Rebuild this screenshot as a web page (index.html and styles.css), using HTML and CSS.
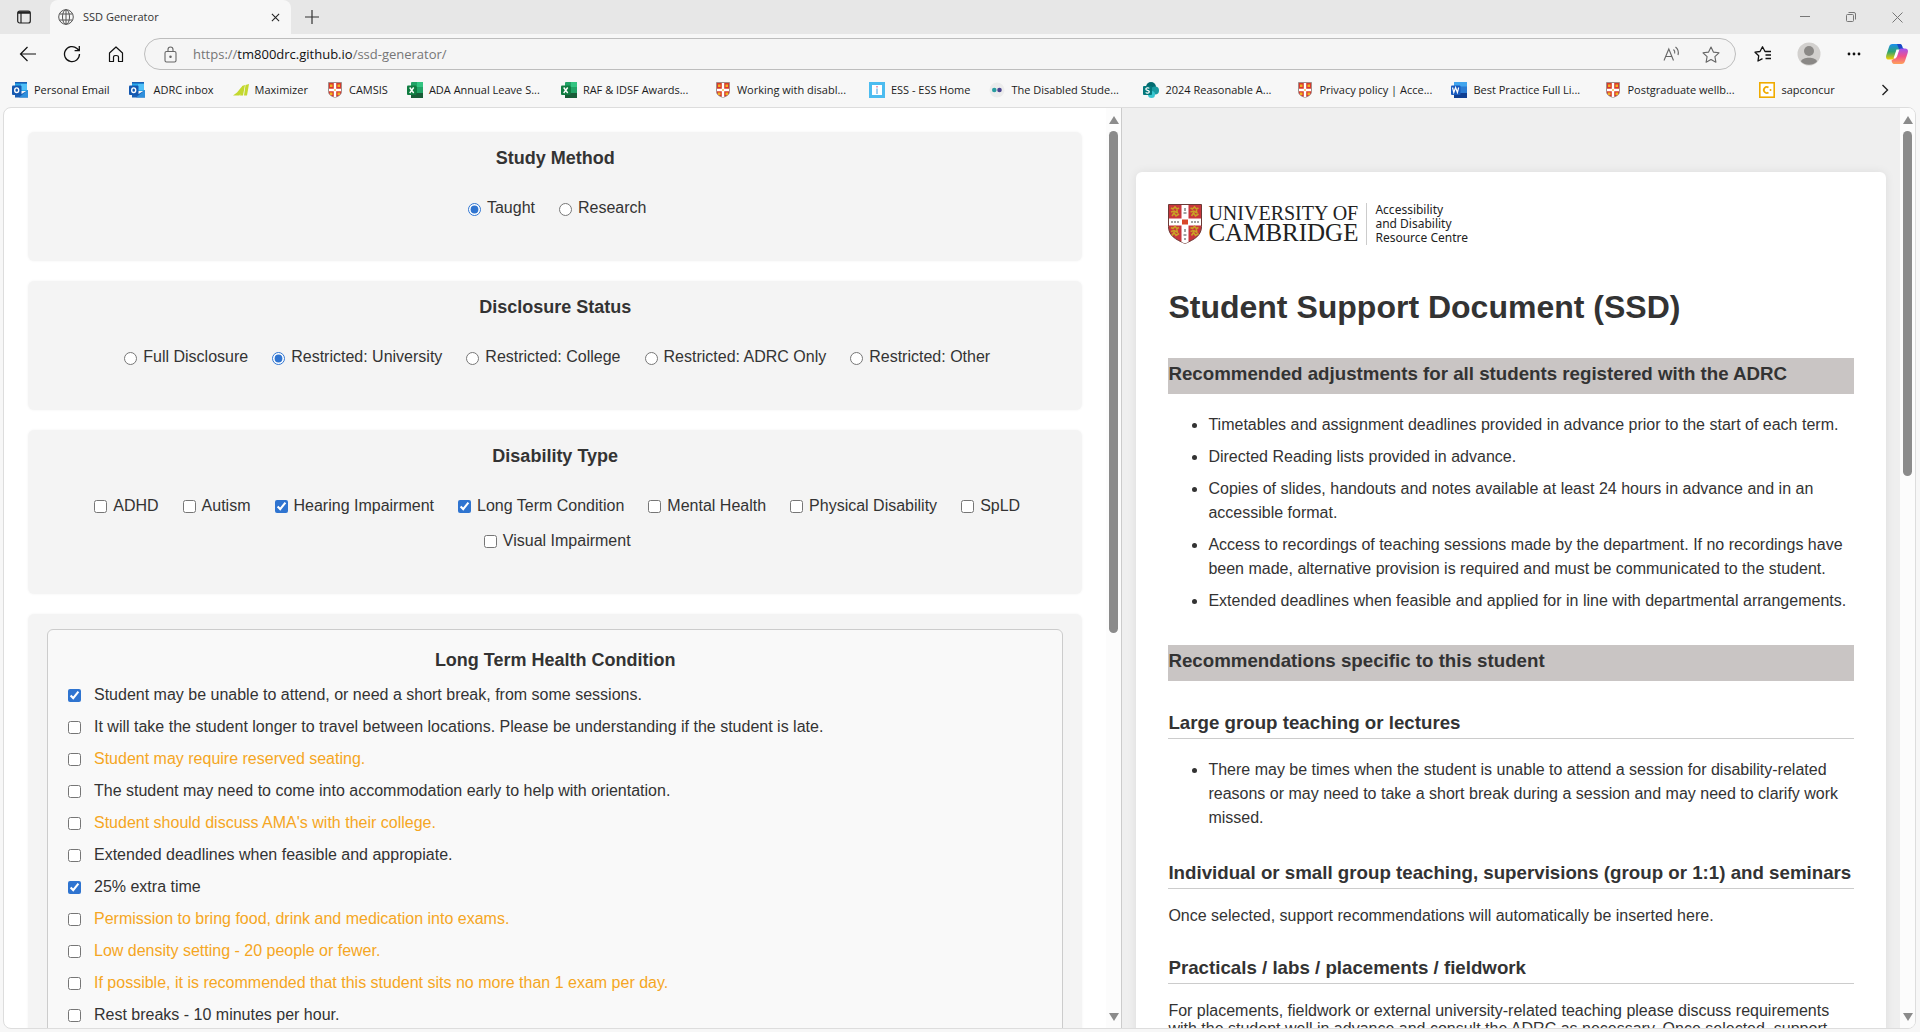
FILE: index.html
```html
<!DOCTYPE html>
<html lang="en">
<head>
<meta charset="utf-8">
<title>SSD Generator</title>
<link rel="stylesheet" href="styles.css">
</head>
<body>
<svg class="defs" aria-hidden="true">
  <symbol id="shield" viewBox="0 0 16 16">
    <path d="M1.500 .5h13v9c0 3.500-3.500 5-6.500 6-3-1-6.500-2.500-6.500-6z" fill="#d8392b" stroke="#8f8a88" stroke-width=".8"/>
    <path d="M6.800 1h2.400v5.800H14v2.400H9.200V15L8 15.500 6.800 15V9.200H2V6.800h4.800z" fill="#fff"/>
    <path d="M3 2.500h2.500v2.500H3zM10.500 2.500H13v2.500h-2.500zM3 10.500h2.500v2.500H3zM10.500 10.500H13v2.500h-2.500zM7.200 7.200h1.600v1.600H7.200z" fill="#f0b323"/>
  </symbol>
  <symbol id="outlook" viewBox="0 0 16 16">
    <path d="M3 0h12v9H3z" fill="#28a8ea"/><path d="M3 0h12v1.500H3z" fill="#1a5fb4"/><path d="M9 2h6v6H9z" fill="#50c0f8"/>
    <path d="M3 8l6.500 4L16 8v7.500H3z" fill="#1a5fb4"/><path d="M16 8v7.500H7z" fill="#2f8fdc"/>
    <rect y="3.500" width="9.500" height="9.500" rx="1" fill="#1458b0"/><ellipse cx="4.700" cy="8.200" rx="2" ry="2.300" fill="none" stroke="#fff" stroke-width="1.400"/>
  </symbol>
  <symbol id="excel" viewBox="0 0 16 16">
    <rect x="4" width="12" height="16" rx="1" fill="#21a366"/><path d="M10 0h6v5h-6z" fill="#33c481"/><path d="M4 5h6v6H4z" fill="#107c41"/><path d="M4 11h12v5H4z" fill="#185c37"/>
    <rect y="3.500" width="9.500" height="9.500" rx="1" fill="#107c41"/><path d="M2.700 5.500l4 5.500M6.700 5.500l-4 5.500" stroke="#fff" stroke-width="1.400"/>
  </symbol>
  <symbol id="word" viewBox="0 0 16 16">
    <rect x="3" width="13" height="16" rx="1" fill="#2b7cd3"/><path d="M3 0h13v4.500H3z" fill="#41a5ee"/><path d="M3 11h13v5H3z" fill="#103f91"/>
    <rect y="3.500" width="9.500" height="9.500" rx="1" fill="#185abd"/><path d="M1.500 5.500l1.300 5 1.800-5 1.800 5 1.300-5" fill="none" stroke="#fff" stroke-width="1.200"/>
  </symbol>
</svg>

<header class="browser">
  <div class="tabstrip">
    <button class="tab-menu" aria-label="Tab actions"><svg width="14" height="14" viewBox="0 0 14 14" fill="none" stroke="#222" stroke-width="1.200"><rect x=".7" y="1" width="12.600" height="12" rx="2"/><path d="M1 2.500h12" stroke-width="2.500"/><path d="M4 3v10"/></svg></button>
    <div class="tab">
      <svg width="16" height="16" viewBox="0 0 16 16" fill="none" stroke="#555"><circle cx="8" cy="8" r="7.300"/><ellipse cx="8" cy="8" rx="3.500" ry="7.300"/><path d="M8 1v14M1.500 5h13M1.500 11h13"/></svg>
      <span class="tab-title">SSD Generator</span>
      <button aria-label="Close tab"><svg width="9" height="9" viewBox="0 0 10 10" stroke="#222" stroke-width="1.200"><path d="M1 1l8 8M9 1L1 9"/></svg></button>
    </div>
    <button class="new-tab" aria-label="New tab"><svg width="14" height="14" viewBox="0 0 14 14" stroke="#333" stroke-width="1.200"><path d="M7 0v14M0 7h14"/></svg></button>
    <div class="window-buttons">
      <button aria-label="Minimize"><svg width="10" height="10" viewBox="0 0 10 10" stroke="#777"><path d="M0 4.500h10"/></svg></button>
      <button aria-label="Restore"><svg width="10" height="10" viewBox="0 0 10 10" fill="none" stroke="#777"><rect x=".5" y="2.500" width="7" height="7" rx="1"/><path d="M2.500.5h5.500a1.500 1.500 0 0 1 1.500 1.500v5.500"/></svg></button>
      <button aria-label="Close"><svg width="11" height="11" viewBox="0 0 11 11" stroke="#777"><path d="M.5.5l10 10M10.500.5l-10 10"/></svg></button>
    </div>
  </div>
  <div class="toolbar">
    <button aria-label="Back"><svg width="18" height="16" viewBox="0 0 18 16" fill="none" stroke="#111" stroke-width="1.200"><path d="M17 8H1.500M8.500 1l-7 7 7 7"/></svg></button>
    <button aria-label="Refresh"><svg width="18" height="18" viewBox="0 0 18 18" fill="none" stroke="#111" stroke-width="1.300"><path d="M16.500 9A7.500 7.500 0 1 1 14 3.500l2 2M16.300 1v4.700h-4.700"/></svg></button>
    <button aria-label="Home"><svg width="16" height="17" viewBox="0 0 16 17" fill="none" stroke="#111" stroke-width="1.200" stroke-linejoin="round"><path d="M1.500 7L8 1l6.500 6v8.500h-4V11c0-2-5-2-5 0v4.500h-4z"/></svg></button>
    <div class="address">
      <svg width="13" height="17" viewBox="0 0 13 17" fill="none" stroke="#666" stroke-width="1.100"><rect x="1" y="5.500" width="11" height="10.500" rx="1.500"/><path d="M4 5.500V3.500a2.500 2.500 0 0 1 5 0v2"/><circle cx="6.500" cy="10.800" r=".7" fill="#666"/></svg>
      <span class="url">https://<b>tm800drc.github.io</b>/ssd-generator/</span>
      <svg width="17" height="16" viewBox="0 0 17 16" fill="none" stroke="#666" stroke-width="1.100"><path d="M1 14.500L5.800 3l4.700 11.500M2.700 10.500h6.200M10.500 3.500c1.200 1 1.500 2.500 1.200 4M12.500 1c2.500 2 3.300 5 2.500 8"/></svg>
      <svg class="star" width="18" height="17" viewBox="0 0 18 17" fill="none" stroke="#666" stroke-width="1.100" stroke-linejoin="round"><path d="M9 1l2.400 5.100 5.600.7-4.100 3.900 1 5.500L9 13.500l-4.900 2.700 1-5.500L1 6.800l5.600-.7z"/></svg>
    </div>
    <div class="tools">
      <button aria-label="Favorites"><svg width="18" height="16" viewBox="0 0 18 16" fill="none" stroke="#111" stroke-width="1.300" stroke-linejoin="round"><path d="M15 5.500h-4L8.500.8 6 5.500l-5 .7 3.700 3.600L4 15l4.500-2.300M11 5.500h6M11.500 9H17M11.500 12.500H17"/></svg></button>
      <button aria-label="Profile"><svg width="24" height="24" viewBox="0 0 24 24"><circle cx="12" cy="12" r="11.500" fill="#d2d0ce"/><circle cx="12" cy="9" r="5" fill="#8a8886"/><path d="M4 19.500c1-5 15-5 16 0a11.500 11.500 0 0 1-16 0z" fill="#8a8886"/></svg></button>
      <button aria-label="Settings and more"><svg width="14" height="4" viewBox="0 0 14 4" fill="#111"><circle cx="2" cy="2" r="1.400"/><circle cx="7" cy="2" r="1.400"/><circle cx="12" cy="2" r="1.400"/></svg></button>
      <button aria-label="Copilot"><svg width="22" height="20" viewBox="0 0 22 20">
        <defs><linearGradient id="cb" x2="0" y2="1"><stop stop-color="#1a8ff0"/><stop offset=".5" stop-color="#2fa470"/><stop offset="1" stop-color="#f7d000"/></linearGradient><linearGradient id="cp" x2="0" y2="1"><stop stop-color="#a154f0"/><stop offset=".5" stop-color="#f0508c"/><stop offset="1" stop-color="#ffa25a"/></linearGradient></defs>
        <path d="M6.500 0H14c1.500 0 2 1.500 2.500 3.500L13 6c-1.500 0-2 1-2.500 3L9 13.500c-.5 1.500-1 2-3 2H3c-3 0-3.500-2-2.500-5L3 3C3.600 1 4.500 0 6.500 0z" fill="url(#cb)"/><path d="M11 0h3c1.500 0 2 1.500 2.500 3.500L18 5h-5z" fill="#1b48c8"/>
        <path d="M15.500 20H8c-1.500 0-2-1.500-2.500-3.500L9 14c1.500 0 2-1 2.500-3L13 6.500c.5-1.500 1-2 3-2h3c3 0 3.500 2 2.500 5L19 17c-.6 2-1.500 3-3.500 3z" fill="url(#cp)"/><path d="M10.500 5.500H13l-3.500 9H7.500z" fill="#fff"/></svg></button>
    </div>
  </div>
  <nav class="bookmarks" aria-label="Favorites bar">
    <a href="#"><svg><use href="#outlook"/></svg>Personal Email</a>
    <a href="#"><svg><use href="#outlook"/></svg>&nbsp;ADRC inbox</a>
    <a href="#"><svg viewBox="0 0 16 16" fill="#c3d82e"><path d="M0 13.500l4-3L8.500 5h2l-4 8.500zM9 4l3-1-2 10.500H7zM12.500 3L16 2l-2 11.500h-3z"/></svg>Maximizer</a>
    <a href="#"><svg><use href="#shield"/></svg>CAMSIS</a>
    <a href="#" class="wide"><svg><use href="#excel"/></svg>ADA Annual Leave S...</a>
    <a href="#" class="wide"><svg><use href="#excel"/></svg>RAF &amp; IDSF Awards...</a>
    <a href="#" class="wide"><svg><use href="#shield"/></svg>Working with disabl...</a>
    <a href="#"><svg viewBox="0 0 16 16"><path d="M0 0h16v16H0z" fill="#4cbcf0"/><path d="M3 3h10v10H3z" fill="#fff"/><path d="M7 4h2v1.500H7z" fill="#e79ab5"/><path d="M7 6.500h2V12H7z" fill="#9ecdf0"/></svg>ESS - ESS Home</a>
    <a href="#" class="wide"><svg viewBox="0 0 16 16"><circle cx="8" cy="8" r="7.500" fill="#ececec"/><circle cx="5.300" cy="8" r="2.300" fill="#2a9da0"/><circle cx="10.500" cy="8" r="2.300" fill="#4b4590"/></svg>The Disabled Stude...</a>
    <a href="#" class="wide"><svg viewBox="0 0 16 16"><circle cx="8" cy="5" r="5" fill="#036c70"/><circle cx="12" cy="8.500" r="4" fill="#1a9ba1"/><circle cx="8.500" cy="12.500" r="3.500" fill="#37c6d0"/><rect y="4" width="9" height="9" rx="1" fill="#03787c"/><path d="M6.300 6.300c-1-1-3.500-.6-3.500.8 0 1.700 3.500 1 3.500 2.700 0 1.400-2.500 1.700-3.600.6" fill="none" stroke="#fff" stroke-width="1.200"/></svg>2024 Reasonable A...</a>
    <a href="#" class="wide"><svg><use href="#shield"/></svg>Privacy policy | Acce...</a>
    <a href="#" class="wide"><svg><use href="#word"/></svg>Best Practice Full Li...</a>
    <a href="#" class="wide"><svg><use href="#shield"/></svg>Postgraduate wellb...</a>
    <a href="#"><svg viewBox="0 0 16 16"><rect x=".8" y=".8" width="14.400" height="14.400" fill="#fff" stroke="#f0ab00" stroke-width="1.600"/><path d="M9.500 5.500a3 3 0 1 0 0 5" fill="none" stroke="#f0ab00" stroke-width="1.800"/><circle cx="11.500" cy="8" r="1" fill="#f0ab00"/></svg>sapconcur</a>
    <button class="more" aria-label="More favorites"><svg viewBox="0 0 8 12" fill="none" stroke="#222" stroke-width="1.400"><path d="M1.500 1l5 5-5 5"/></svg></button>
  </nav>
</header>

<div class="page">
  <form class="form-pane">
    <div class="cards">
      <section class="card">
        <h2>Study Method</h2>
        <div class="choices radios">
          <label><input type="radio" name="method" checked>Taught</label>
          <label><input type="radio" name="method">Research</label>
        </div>
      </section>
      <section class="card">
        <h2>Disclosure Status</h2>
        <div class="choices radios">
          <label><input type="radio" name="disclosure">Full Disclosure</label>
          <label><input type="radio" name="disclosure" checked>Restricted: University</label>
          <label><input type="radio" name="disclosure">Restricted: College</label>
          <label><input type="radio" name="disclosure">Restricted: ADRC Only</label>
          <label><input type="radio" name="disclosure">Restricted: Other</label>
        </div>
      </section>
      <section class="card">
        <h2>Disability Type</h2>
        <div class="choices">
          <label><input type="checkbox">ADHD</label>
          <label><input type="checkbox">Autism</label>
          <label><input type="checkbox" checked>Hearing Impairment</label>
          <label><input type="checkbox" checked>Long Term Condition</label>
          <label><input type="checkbox">Mental Health</label>
          <label><input type="checkbox">Physical Disability</label>
          <label><input type="checkbox">SpLD</label>
          <label><input type="checkbox">Visual Impairment</label>
        </div>
      </section>
      <section class="card options-card">
        <div class="options">
          <h2>Long Term Health Condition</h2>
          <label><input type="checkbox" checked>Student may be unable to attend, or need a short break, from some sessions.</label>
          <label><input type="checkbox">It will take the student longer to travel between locations. Please be understanding if the student is late.</label>
          <label class="amber"><input type="checkbox">Student may require reserved seating.</label>
          <label><input type="checkbox">The student may need to come into accommodation early to help with orientation.</label>
          <label class="amber"><input type="checkbox">Student should discuss AMA's with their college.</label>
          <label><input type="checkbox">Extended deadlines when feasible and appropiate.</label>
          <label><input type="checkbox" checked>25% extra time</label>
          <label class="amber"><input type="checkbox">Permission to bring food, drink and medication into exams.</label>
          <label class="amber"><input type="checkbox">Low density setting - 20 people or fewer.</label>
          <label class="amber"><input type="checkbox">If possible, it is recommended that this student sits no more than 1 exam per day.</label>
          <label><input type="checkbox">Rest breaks - 10 minutes per hour.</label>
        </div>
      </section>
    </div>
    <div class="scrollbar" aria-hidden="true">
      <svg viewBox="0 0 10 8"><path d="M5 0l5 8H0z"/></svg>
      <div class="track"><div class="thumb" style="height:57.4%"></div></div>
      <svg viewBox="0 0 10 8"><path d="M5 8l5-8H0z"/></svg>
    </div>
  </form>

  <main class="preview-pane">
    <div class="desk">
      <article class="paper">
        <div class="logo">
          <svg class="crest" width="34" height="40" viewBox="0 0 34 40">
            <path d="M.5.500h33v22c0 9-7 13-16.500 17C7.500 35.500.5 31.500.5 22.500z" fill="#c8363c" stroke="#6b3a36"/>
            <path d="M13.500 1h7v13.500H33v7H20.500V38L17 39.500 13.500 38V21.500H1v-7h12.500z" fill="#fff"/>
            <g fill="none" stroke="#c9a227" stroke-width="1.600"><path id="lion" d="M3 4l2 1 2-2 2 2 2-1M3 8l3-1 4 2M4 12l2-3 2 3 3-2M9 4v5"/><use href="#lion" x="19.500"/><use href="#lion" y="19.500"/><use href="#lion" x="19.500" y="19.500"/></g>
            <path d="M14 15.500h6v5h-6z" fill="#d9472b"/>
            <path d="M17 4v3M15.500 9h3M17 25v3M15.500 31h3M4 17v2M7 17v2M10 17v2M24 17v2M27 17v2M30 17v2M17 34v2" stroke="#444"/>
          </svg>
          <div class="wordmark"><span class="small">UNIVERSITY OF</span><span class="big">CAMBRIDGE</span></div>
          <div class="centre">Accessibility<br>and Disability<br>Resource Centre</div>
        </div>
        <h1>Student Support Document (SSD)</h1>
        <h3 class="bar">Recommended adjustments for all students registered with the ADRC</h3>
        <ul>
          <li>Timetables and assignment deadlines provided in advance prior to the start of each term.</li>
          <li>Directed Reading lists provided in advance.</li>
          <li>Copies of slides, handouts and notes available at least 24 hours in advance and in an accessible format.</li>
          <li>Access to recordings of teaching sessions made by the department. If no recordings have been made, alternative provision is required and must be communicated to the student.</li>
          <li>Extended deadlines when feasible and applied for in line with departmental arrangements.</li>
        </ul>
        <h3 class="bar">Recommendations specific to this student</h3>
        <h3 class="topic">Large group teaching or lectures</h3>
        <ul>
          <li>There may be times when the student is unable to attend a session for disability-related reasons or may need to take a short break during a session and may need to clarify work missed.</li>
        </ul>
        <h3 class="topic">Individual or small group teaching, supervisions (group or 1:1) and seminars</h3>
        <p>Once selected, support recommendations will automatically be inserted here.</p>
        <h3 class="topic">Practicals / labs / placements / fieldwork</h3>
        <p>For placements, fieldwork or external university-related teaching please discuss requirements with the student well in advance and consult the ADRC as necessary. Once selected, support</p>
      </article>
    </div>
    <div class="scrollbar" aria-hidden="true">
      <svg viewBox="0 0 10 8"><path d="M5 0l5 8H0z"/></svg>
      <div class="track"><div class="thumb" style="height:39.4%"></div></div>
      <svg viewBox="0 0 10 8"><path d="M5 8l5-8H0z"/></svg>
    </div>
  </main>
</div>
</body>
</html>
```
FILE: styles.css
```css
* { box-sizing: border-box; }

body {
  margin: 0;
  height: 100vh;
  display: flex;
  flex-direction: column;
  overflow: hidden;
  background: #f7f7f7;
  color: #333;
  font: 16px/24px Arial, "Liberation Sans", sans-serif;
}

h1, h2, h3, p, ul { margin: 0; }
button { padding: 0; border: 0; background: none; display: flex; align-items: center; justify-content: center; }
svg { flex: none; display: block; }
.defs { position: absolute; width: 0; height: 0; }

/* Browser chrome */
.browser { flex: none; font: 11px/16px "Segoe UI", "Open Sans", sans-serif; color: #1b1b1b; }

.tabstrip { display: flex; height: 34px; background: #e7e7e7; }
.tab-menu { width: 50px; padding-right: 2px; }
.tab {
  display: flex;
  align-items: center;
  gap: 9px;
  width: 241px;
  padding: 0 11px 0 8px;
  border-radius: 8px 8px 0 0;
  background: #f7f7f7;
}
.tab-title { flex: 1; color: #333; }
.new-tab { width: 42px; }
.window-buttons { display: flex; margin-left: auto; }
.window-buttons button { width: 46px; }

.toolbar { display: flex; align-items: center; height: 40px; padding: 0 12px 0 6px; }
.toolbar > button { width: 44px; height: 32px; }
.address {
  flex: 1;
  display: flex;
  align-items: center;
  height: 32px;
  margin: 0 18px 0 6px;
  padding: 0 15px 0 19px;
  border: 1px solid #bdbdbd;
  border-radius: 16px;
  background: #f5f5f5;
}
.url { flex: 1; padding-left: 16px; font-size: 13px; color: #767676; }
.url b { font-weight: 400; color: #111; }
.star { margin-left: 22px; }
.tools { display: flex; justify-content: space-between; align-items: center; width: 154px; }

.bookmarks { display: flex; align-items: center; gap: 19px; height: 33px; padding: 0 12px 2px; }
.bookmarks a {
  display: flex;
  align-items: center;
  gap: 6px;
  color: #1b1b1b;
  text-decoration: none;
  white-space: nowrap;
}
.bookmarks a svg { width: 16px; height: 16px; }
.bookmarks .wide { width: 135px; }
.bookmarks .more { margin-left: auto; width: 46px; }
.more svg { width: 8px; height: 12px; }

/* Page area */
.page {
  flex: 1;
  min-height: 0;
  display: flex;
  margin: 0 4px 3px 3px;
  border: 1px solid #ddd;
  border-radius: 8px;
  overflow: hidden;
  background: #fff;
}
.form-pane { flex: 1118 1 0; min-width: 0; display: flex; border-right: 1px solid #ccc; }
.preview-pane { flex: 793 1 0; min-width: 0; display: flex; background: #efefef; }

.scrollbar {
  flex: none;
  width: 15px;
  display: flex;
  flex-direction: column;
  align-items: center;
  gap: 7px;
  padding: 8px 0 7px;
  background: #fcfcfc;
}
.scrollbar svg { width: 10px; height: 8px; fill: #8b8b8b; }
.track { flex: 1; }
.thumb { width: 9px; border-radius: 5px; background: #8b8b8b; }

.cards {
  flex: 1;
  display: flex;
  flex-direction: column;
  gap: 20px;
  overflow: hidden;
  padding: 24px 24px 0;
}
.card {
  flex: none;
  padding: 16px 20px 41px;
  border-radius: 6px;
  background: #f4f4f4;
  box-shadow: 0 0 3px rgba(0, 0, 0, .05);
}
.card h2 { font-size: 18px; line-height: 20px; text-align: center; }
.choices {
  display: flex;
  flex-wrap: wrap;
  justify-content: center;
  gap: 11px 24px;
  padding: 28px 0 0 4px;
}
.choices label, .options label { display: flex; align-items: center; }
input { width: 13px; height: 13px; margin: 0 6px 0 0; accent-color: #2f74d0; }
.radios input { margin-top: 3px; }

.options-card { padding: 15px 19px; }
.options { padding: 20px; border: 1px solid #ccc; border-radius: 6px; background: #f9f9f9; }
.options h2 { margin-bottom: 13px; }
.options label { margin-bottom: 8px; }
.options input { margin-right: 13px; }
.amber { color: #f5a623; }

/* Document preview */
.desk { flex: 1; overflow: hidden; padding: 64px 14px 0; }
.paper {
  padding: 32px 32px 200px;
  border-radius: 6px;
  background: #fff;
  box-shadow: 0 0 10px rgba(0, 0, 0, .08);
}
.logo { display: flex; align-items: center; height: 40px; margin-bottom: 44px; color: #222; }
.wordmark {
  display: flex;
  flex-direction: column;
  margin: 0 8px 0 6px;
  font-family: "Liberation Serif", serif;
}
.small { font-size: 20px; line-height: 18px; }
.big { font-size: 25px; line-height: 22px; }
.centre {
  padding-left: 8px;
  border-left: 1px solid #ccc;
  font: 12px/14px "Noto Sans", sans-serif;
}
h1 { margin-bottom: 32px; font-size: 32px; line-height: 38px; }
.bar {
  padding: 5px 0 9px;
  background: #c9c5c4;
  line-height: 22px;
}
.topic {
  padding-bottom: 4px;
  border-bottom: 1px solid #ccc;
  line-height: 22px;
}
.bar + .topic { margin-top: 31px; }
.paper ul { margin: 19px 0 32px; padding-left: 40px; }
.paper li + li { margin-top: 8px; }
.paper p { margin: 18px 0 32px; line-height: 18px; }
```
